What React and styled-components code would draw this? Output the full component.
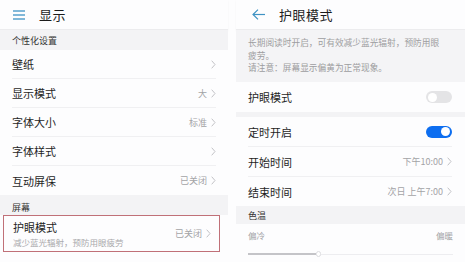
import React from "react";
import styled, { createGlobalStyle } from "styled-components";

const Global = createGlobalStyle`
  html, body { margin: 0; padding: 0; background: #fdfdfe; }
  body { width: 465px; height: 262px; overflow: hidden; font-family: "Noto Sans CJK SC", "Noto Sans", sans-serif; }
  * { box-sizing: border-box; }
`;

const Screen = styled.div`
  display: flex;
  gap: 8px;
  width: 465px;
  height: 262px;
  background: #fdfdfe;
`;

const Panel = styled.div`
  width: ${(p) => p.$w}px;
  flex: none;
  display: flex;
  flex-direction: column;
  background: #fdfdfe;
`;

const Header = styled.div`
  height: 30px;
  display: flex;
  align-items: center;
  gap: ${(p) => p.$gap}px;
  padding-left: ${(p) => p.$pl}px;
  border-bottom: 1px solid #ececee;
  box-shadow: 0 1px 2px rgba(0,0,0,0.04);
`;

const Title = styled.div`
  font-size: 13px;
  color: #1c1c1c;
  letter-spacing: 0.5px;
`;

const Band = styled.div`
  height: ${(p) => p.$h}px;
  display: flex;
  align-items: center;
  padding-left: ${(p) => p.$pl || 12}px;
  padding-top: ${(p) => p.$pt || 0}px;
  background: #f3f3f5;
  font-size: 9px;
  color: #333;
`;

const Row = styled.div`
  height: ${(p) => p.$h || 29}px;
  margin: 0 ${(p) => p.$mr || 12}px 0 12px;
  display: flex;
  align-items: center;
  justify-content: space-between;
  border-bottom: ${(p) => (p.$last ? "none" : "1px solid #f0f0f2")};
`;

const Label = styled.div`
  font-size: 11px;
  color: #1f1f1f;
`;

const Value = styled.div`
  display: flex;
  align-items: center;
  gap: 4px;
  font-size: 9px;
  color: #a3a3a6;
`;

const Chevron = () => (
  <svg width="5" height="9" viewBox="0 0 5 9">
    <path d="M0.7 0.7 L4 4.5 L0.7 8.3" fill="none" stroke="#c2c2c6" strokeWidth="1" />
  </svg>
);

const EyeBox = styled.div`
  margin: 0 8px 0 3px;
  height: 37px;
  border: 1px solid #c07078;
  padding: 0 8px 0 9px;
  display: flex;
  align-items: center;
  justify-content: space-between;
`;

const Stack = styled.div`
  display: flex;
  flex-direction: column;
  gap: 1px;
`;

const Sub = styled.div`
  font-size: 8.5px;
  color: #a9a9ac;
`;

const Desc = styled.div`
  height: 52px;
  background: #f4f4f6;
  padding: 7px 20px 0 12px;
  font-size: 8.7px;
  line-height: 12.5px;
  color: #9d9da0;
`;

const Toggle = styled.div`
  width: 26px;
  height: 12px;
  border-radius: 6px;
  background: ${(p) => (p.$on ? "#0d6ef0" : "#e4e4e6")};
  display: flex;
  align-items: center;
  justify-content: ${(p) => (p.$on ? "flex-end" : "flex-start")};
  padding: 0 2px;
`;

const Knob = styled.div`
  width: 9px;
  height: 9px;
  border-radius: 50%;
  background: #ffffff;
`;

const Gap = styled.div`
  height: ${(p) => p.$h}px;
  background: #f3f3f5;
`;

const TempRow = styled.div`
  height: 14px;
  margin: 4px 12px 0 12px;
  display: flex;
  justify-content: space-between;
  align-items: center;
  font-size: 8.5px;
  color: #a3a3a6;
`;

const Slider = styled.div`
  margin: 9px 12px 0 12px;
  height: 6px;
  display: flex;
  align-items: center;
`;

const TrackFill = styled.div`
  height: 1.5px;
  background: #c4c4c8;
`;

const Thumb = styled.div`
  width: 5px;
  height: 6px;
  border-radius: 3px;
  border: 1px solid #dcdcdf;
  background: #fff;
  flex: none;
`;

const TrackRest = styled.div`
  height: 1px;
  flex: 1;
  background: #ededf0;
`;

const Menu = () => (
  <svg width="12" height="10" viewBox="0 0 12 10">
    <g stroke="#3f93c4" strokeWidth="1.3">
      <line x1="0" y1="1" x2="12" y2="1" />
      <line x1="0" y1="5" x2="12" y2="5" />
      <line x1="0" y1="9" x2="12" y2="9" />
    </g>
  </svg>
);

const Back = () => (
  <svg width="13" height="11" viewBox="0 0 13 11">
    <g stroke="#3f93c4" strokeWidth="1.2" fill="none">
      <path d="M6 0.6 L1 5.5 L6 10.4" />
      <line x1="1" y1="5.5" x2="13" y2="5.5" />
    </g>
  </svg>
);

const leftRows = [
  { label: "壁纸", value: "" },
  { label: "显示模式", value: "大" },
  { label: "字体大小", value: "标准" },
  { label: "字体样式", value: "" },
  { label: "互动屏保", value: "已关闭", last: true },
];

export default function App() {
  return (
    <>
      <Global />
      <Screen>
        <Panel $w={228}>
          <Header $gap={14} $pl={13}>
            <Menu />
            <Title>显示</Title>
          </Header>
          <Band $h={20}>个性化设置</Band>
          {leftRows.map((r) => (
            <Row key={r.label} $last={r.last}>
              <Label>{r.label}</Label>
              <Value>
                {r.value}
                <Chevron />
              </Value>
            </Row>
          ))}
          <Band $h={20} $pt={4}>屏幕</Band>
          <EyeBox>
            <Stack>
              <Label>护眼模式</Label>
              <Sub>减少蓝光辐射，预防用眼疲劳</Sub>
            </Stack>
            <Value>
              已关闭
              <Chevron />
            </Value>
          </EyeBox>
        </Panel>
        <Panel $w={229}>
          <Header $gap={14} $pl={16}>
            <Back />
            <Title>护眼模式</Title>
          </Header>
          <Desc>
            长期阅读时开启，可有效减少蓝光辐射，预防用眼疲劳。
            <br />
            请注意：屏幕显示偏黄为正常现象。
          </Desc>
          <Row $h={30} $mr={13} $last>
            <Label>护眼模式</Label>
            <Toggle>
              <Knob />
            </Toggle>
          </Row>
          <Gap $h={5} />
          <Row $h={30} $mr={13}>
            <Label>定时开启</Label>
            <Toggle $on>
              <Knob />
            </Toggle>
          </Row>
          <Row $h={30} $mr={13}>
            <Label>开始时间</Label>
            <Value>
              下午10:00
              <Chevron />
            </Value>
          </Row>
          <Row $h={29} $mr={13} $last>
            <Label>结束时间</Label>
            <Value>
              次日 上午7:00
              <Chevron />
            </Value>
          </Row>
          <Band $h={18}>色温</Band>
          <TempRow>
            <span>偏冷</span>
            <span>偏暖</span>
          </TempRow>
          <Slider>
            <TrackFill style={{ width: "33%" }} />
            <Thumb />
            <TrackRest />
          </Slider>
        </Panel>
      </Screen>
    </>
  );
}
